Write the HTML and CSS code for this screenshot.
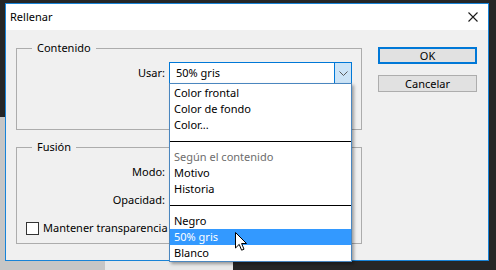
FILE: index.html
```html
<!DOCTYPE html>
<html lang="es">
<head>
    <meta charset="UTF-8">
    <meta name="viewport" content="width=device-width, initial-scale=1.0">
    <title>Rellenar</title>
    <link rel="stylesheet" href="styles.css">
</head>
<body>

<!-- What shows of the canvas behind the dialog -->
<div class="backdrop backdrop-gray"></div>
<div class="backdrop backdrop-pale"></div>

<div class="dialog">
    <div class="titlebar">
        <span class="title">Rellenar</span>
        <svg class="close" width="10" height="10" viewBox="0 0 10 10">
            <path d="M0.5 0.5 L9.5 9.5 M9.5 0.5 L0.5 9.5" stroke="#1a1a1a" stroke-width="1.1" fill="none"/>
        </svg>
    </div>

    <div class="dialog-body">
        <div class="groups">
            <!-- Contenido -->
            <fieldset class="group group-content">
                <legend>Contenido</legend>
                <div class="field-grid">
                    <label class="field-label" for="usar">Usar:</label>
                    <div class="select is-open" id="usar">
                        <span class="select-value">50% gris</span>
                        <span class="select-arrow">
                            <svg width="9" height="5" viewBox="0 0 9 5">
                                <path d="M0.5 0.5 L4.5 4.5 L8.5 0.5" stroke="#5a5a5a" fill="none"/>
                            </svg>
                        </span>
                        <ul class="select-list">
                            <li>Color frontal</li>
                            <li>Color de fondo</li>
                            <li>Color...</li>
                            <li class="separator"></li>
                            <li class="disabled">Según el contenido</li>
                            <li>Motivo</li>
                            <li>Historia</li>
                            <li class="separator"></li>
                            <li>Negro</li>
                            <li class="selected">50% gris</li>
                            <li>Blanco</li>
                        </ul>
                    </div>
                </div>
            </fieldset>

            <!-- Fusión (its controls sit under the open list) -->
            <fieldset class="group group-blend">
                <legend>Fusión</legend>
                <div class="field-grid">
                    <label class="field-label">Modo:</label>
                    <div class="select"></div>
                    <label class="field-label">Opacidad:</label>
                    <div class="opacity"><span class="input"></span></div>
                </div>
                <label class="check">
                    <span class="check-box"></span>
                    Mantener transparencia
                </label>
            </fieldset>
        </div>

        <div class="buttons">
            <button type="button" class="btn btn-default">OK</button>
            <button type="button" class="btn">Cancelar</button>
        </div>
    </div>
</div>

<!-- Mouse pointer over the highlighted item -->
<svg class="cursor" width="13" height="20" viewBox="0 0 13 20">
    <path d="M0.5 0.5 L0.5 16 L4.2 12.4 L6.6 18.2 L9 17.2 L6.6 11.5 L11.5 11.5 Z" fill="#fff" stroke="#000" stroke-width="1" stroke-linejoin="miter"/>
</svg>

</body>
</html>
```

FILE: styles.css
```css
body {
    margin: 0;
    width: 496px;
    height: 270px;
    overflow: hidden;
    position: relative;
    background-color: #262626;
    font-family: "Noto Sans", "Open Sans", sans-serif;
    font-size: 11px;
    line-height: 16px;
    color: #000;
}
.backdrop {
    position: absolute;
}
.backdrop-gray {
    left: 0;
    top: 117px;
    width: 105px;
    height: 153px;
    background-color: #c6c6c6;
}
.backdrop-pale {
    left: 105px;
    top: 200px;
    width: 128px;
    height: 70px;
    background-color: #e8e8e8;
}
.dialog {
    position: absolute;
    left: 5px;
    top: 3px;
    width: 482px;
    height: 256px;
    border: 1px solid #1883d7;
    background-color: #f0f0f0;
}
.titlebar {
    height: 26px;
    background-color: #fff;
    display: flex;
    align-items: center;
    justify-content: space-between;
    padding: 0 10px 0 4px;
}
.title {
    margin-top: -1px;
}
.dialog-body {
    display: flex;
    align-items: flex-start;
    padding: 10px 0 0 10px;
}
.groups {
    width: 346px;
}
.group {
    margin: 0;
    padding: 0;
    border: 1px solid #acacac;
    min-width: 0;
}
.group legend {
    margin-left: 15px;
    padding: 0 5px;
}
.field-grid {
    display: grid;
    grid-template-columns: 148px 183px;
    column-gap: 4px;
    align-items: center;
}
.field-label {
    text-align: right;
}
.group-content .field-grid {
    padding: 6px 0 45px;
}
.group-blend {
    margin-top: 9px;
}
.group-blend .field-grid {
    padding-top: 6px;
    row-gap: 6px;
}
.select {
    position: relative;
    box-sizing: border-box;
    height: 22px;
    border: 1px solid #0078d7;
    background-color: #fff;
    display: flex;
    align-items: center;
}
.select-value {
    flex: 1;
    padding-left: 6px;
}
.select-arrow {
    width: 16px;
    align-self: stretch;
    border-left: 1px solid #0078d7;
    background-color: #cce4f7;
    display: flex;
    align-items: center;
    justify-content: center;
}
.select-list {
    position: absolute;
    z-index: 2;
    left: -1px;
    top: 20px;
    width: 183px;
    box-sizing: border-box;
    margin: 0;
    padding: 1px 0 0;
    list-style: none;
    background-color: #fff;
    border: 1px solid #4a86bf;
    box-shadow: 2px 2px 3px rgba(0, 0, 0, 0.35);
}
.select-list li {
    height: 16px;
    padding-left: 4px;
    white-space: nowrap;
}
.select-list .separator {
    position: relative;
}
.select-list .separator::after {
    content: "";
    position: absolute;
    left: 0;
    right: 0;
    top: 8px;
    border-top: 1px solid #000;
}
.select-list .disabled {
    color: #6d6d6d;
}
.select-list .selected {
    background-color: #3399ff;
    color: #fff;
}
.opacity {
    display: flex;
    align-items: center;
    height: 22px;
}
.input {
    width: 40px;
    height: 20px;
    border: 1px solid #7a7a7a;
    background-color: #fff;
}
.check {
    display: flex;
    align-items: center;
    gap: 4px;
    margin: 9px 0 7px 9px;
}
.check-box {
    width: 11px;
    height: 11px;
    border: 1px solid #333;
    background-color: #fff;
}
.buttons {
    display: flex;
    flex-direction: column;
    gap: 11px;
    margin: 7px 0 0 16px;
}
.btn {
    box-sizing: border-box;
    width: 99px;
    height: 17px;
    padding: 0;
    font-family: inherit;
    font-size: 11px;
    line-height: 14px;
    color: #000;
    background-color: #e1e1e1;
    border: 1px solid #adadad;
}
.btn-default {
    border: 2px solid #0078d7;
}
.cursor {
    position: absolute;
    z-index: 3;
    left: 235px;
    top: 232px;
}
```
